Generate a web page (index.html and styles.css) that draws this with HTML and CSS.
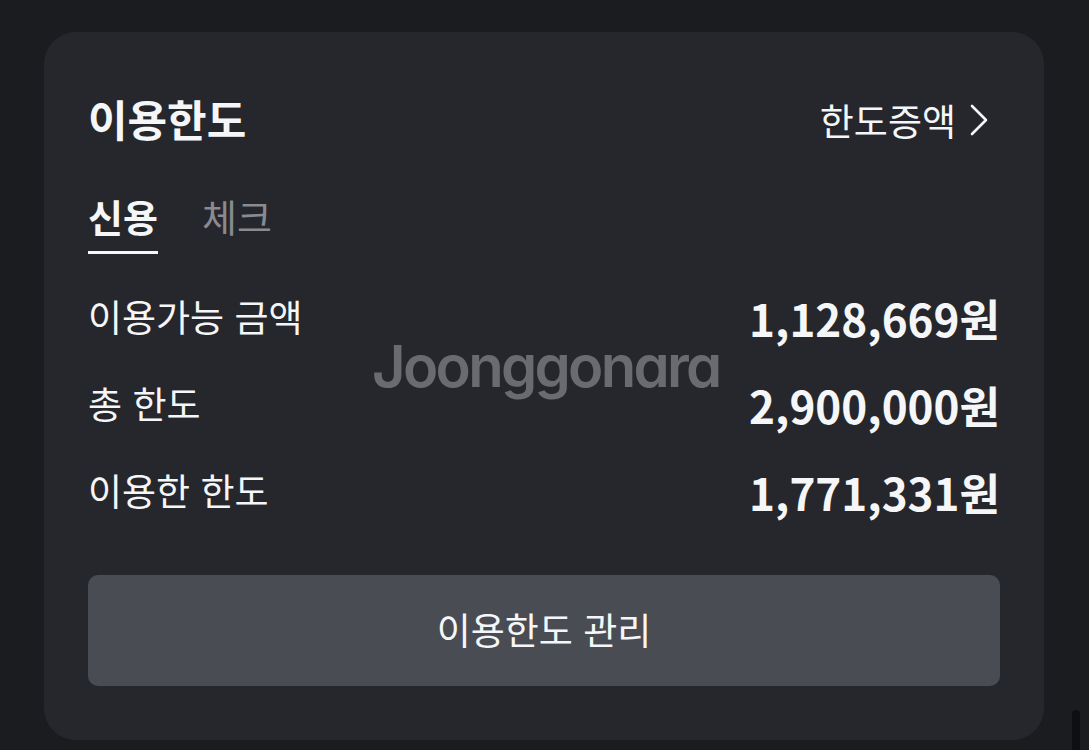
FILE: index.html
```html
<!DOCTYPE html>
<html lang="ko">
<head>
<meta charset="utf-8">
<title>이용한도</title>
<link rel="stylesheet" href="styles.css">
</head>
<body>
<div class="page">
  <section class="card">
    <div class="head">
      <h1 class="title">이용한도</h1>
      <a class="more">한도증액<svg class="chev" width="18" height="32" viewBox="0 0 18 32"><path d="M2 2 L16 16 L2 30" fill="none" stroke="#f5f6f8" stroke-width="2.6" stroke-linecap="round" stroke-linejoin="round"/></svg></a>
    </div>
    <div class="tabs">
      <span class="tab active">신용</span>
      <span class="tab">체크</span>
    </div>
    <div class="rows">
      <div class="row"><span class="label">이용가능 금액</span><span class="value">1,128,669원</span></div>
      <div class="row"><span class="label">총 한도</span><span class="value">2,900,000원</span></div>
      <div class="row"><span class="label">이용한 한도</span><span class="value">1,771,331원</span></div>
    </div>
    <button class="manage">이용한도 관리</button>
    <div class="watermark">Joonggonara</div>
  </section>
  <div class="scroll"></div>
</div>
</body>
</html>
```
FILE: styles.css
```css
html, body {
  margin: 0;
  padding: 0;
  background: #1b1c20;
  height: 100%;
  overflow: hidden;
}
body {
  font-family: "Noto Sans CJK KR", "Noto Sans", sans-serif;
  color: #f5f6f8;
}
.page {
  padding: 32px 45px 10px 44px;
  position: relative;
  height: 750px;
  box-sizing: border-box;
}
.card {
  position: relative;
  background: #26272c;
  border-radius: 32px;
  padding: 62px 44px 54px 44px;
  display: flex;
  flex-direction: column;
}
.head {
  display: flex;
  justify-content: space-between;
  align-items: center;
  height: 48px;
}
.title {
  margin: 0;
  font-size: 43px;
  line-height: 48px;
  font-weight: 700;
}
.more {
  display: flex;
  align-items: center;
  font-size: 37px;
  line-height: 48px;
  color: #f5f6f8;
  margin-top: 4px;
  margin-right: 12px;
}
.chev {
  margin-left: 14px;
}
.tabs {
  display: flex;
  gap: 44px;
  margin-top: 52px;
}
.tab {
  font-size: 38px;
  line-height: 44px;
  padding-bottom: 13px;
  border-bottom: 3px solid transparent;
  color: #898b91;
  font-weight: 400;
}
.tab.active {
  color: #f5f6f8;
  font-weight: 700;
  border-bottom-color: #f5f6f8;
}
.rows {
  margin-top: 20px;
  display: flex;
  flex-direction: column;
}
.row {
  display: flex;
  justify-content: space-between;
  align-items: center;
  height: 87px;
}
.label {
  font-size: 37px;
  line-height: 48px;
  font-weight: 400;
  margin-top: -3px;
}
.value {
  font-size: 44px;
  line-height: 52px;
  font-weight: 700;
}
.manage {
  margin-top: 40px;
  height: 111px;
  border: none;
  border-radius: 10px;
  background: #4a4c54;
  color: #f5f6f8;
  font-family: inherit;
  font-size: 37px;
  line-height: 48px;
  font-weight: 400;
  padding: 0 0 4px 0;
}
.watermark {
  position: absolute;
  left: 328px;
  top: 299px;
  font-family: Inter, "Noto Sans", sans-serif;
  font-feature-settings: "cv11";
  font-size: 58px;
  font-weight: 600;
  color: #6a6b70;
  letter-spacing: -2.7px;
}
.scroll {
  position: absolute;
  left: 1072px;
  top: 710px;
  width: 8px;
  height: 60px;
  border-radius: 4px;
  background: #0e0f12;
}
```
